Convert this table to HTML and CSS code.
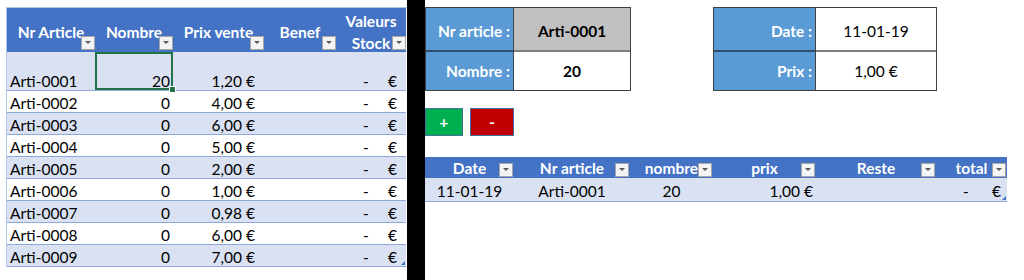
FILE: index.html
```html
<!DOCTYPE html>
<html lang="fr">
<head>
<meta charset="utf-8">
<title>Stock</title>
<link rel="stylesheet" href="styles.css">
</head>
<body>
<div class="page">
  <section class="stock">
    <div class="stock-tbl">
      <div class="th"><span>Nr Article</span><span class="flt"></span></div>
      <div class="th"><span>Nombre</span><span class="flt"></span></div>
      <div class="th"><span>Prix vente</span><span class="flt"></span></div>
      <div class="th"><span>Benef</span><span class="flt"></span></div>
      <div class="th"><span>Valeurs<br>Stock</span><span class="flt"></span></div>

      <div class="row band">
        <div class="c">Arti-0001</div><div class="c r sel">20<span class="handle"></span></div><div class="c r money">1,20 €</div><div class="c"></div><div class="c acct"><span>-</span><span>€</span></div>
      </div>
      <div class="row">
        <div class="c">Arti-0002</div><div class="c r">0</div><div class="c r money">4,00 €</div><div class="c"></div><div class="c acct"><span>-</span><span>€</span></div>
      </div>
      <div class="row band">
        <div class="c">Arti-0003</div><div class="c r">0</div><div class="c r money">6,00 €</div><div class="c"></div><div class="c acct"><span>-</span><span>€</span></div>
      </div>
      <div class="row">
        <div class="c">Arti-0004</div><div class="c r">0</div><div class="c r money">5,00 €</div><div class="c"></div><div class="c acct"><span>-</span><span>€</span></div>
      </div>
      <div class="row band">
        <div class="c">Arti-0005</div><div class="c r">0</div><div class="c r money">2,00 €</div><div class="c"></div><div class="c acct"><span>-</span><span>€</span></div>
      </div>
      <div class="row">
        <div class="c">Arti-0006</div><div class="c r">0</div><div class="c r money">1,00 €</div><div class="c"></div><div class="c acct"><span>-</span><span>€</span></div>
      </div>
      <div class="row band">
        <div class="c">Arti-0007</div><div class="c r">0</div><div class="c r money">0,98 €</div><div class="c"></div><div class="c acct"><span>-</span><span>€</span></div>
      </div>
      <div class="row">
        <div class="c">Arti-0008</div><div class="c r">0</div><div class="c r money">6,00 €</div><div class="c"></div><div class="c acct"><span>-</span><span>€</span></div>
      </div>
      <div class="row band">
        <div class="c">Arti-0009</div><div class="c r">0</div><div class="c r money">7,00 €</div><div class="c"></div><div class="c acct last"><span>-</span><span>€</span><span class="resize"></span></div>
      </div>
    </div>
  </section>

  <div class="divider"></div>

  <section class="panel">
    <div class="forms">
      <div class="form form-a">
        <div class="lbl row1">Nr article :</div>
        <div class="val row1 grey bold">Arti-0001</div>
        <div class="lbl">Nombre :</div>
        <div class="val bold">20</div>
      </div>
      <div class="form form-b">
        <div class="lbl row1">Date :</div>
        <div class="val row1">11-01-19</div>
        <div class="lbl">Prix :</div>
        <div class="val">1,00 €</div>
      </div>
    </div>

    <div class="buttons">
      <button class="btn plus" type="button">+</button>
      <button class="btn minus" type="button">-</button>
    </div>

    <div class="log-tbl">
      <div class="lh"><span>Date</span><span class="flt"></span></div>
      <div class="lh"><span>Nr article</span><span class="flt"></span></div>
      <div class="lh"><span>nombre</span><span class="flt"></span></div>
      <div class="lh"><span>prix</span><span class="flt"></span></div>
      <div class="lh"><span>Reste</span><span class="flt"></span></div>
      <div class="lh"><span>total</span><span class="flt"></span></div>

      <div class="ld ctr">11-01-19</div>
      <div class="ld ctr">Arti-0001</div>
      <div class="ld ctr">20</div>
      <div class="ld r money">1,00 €</div>
      <div class="ld"></div>
      <div class="ld acct2 last"><span>-</span><span>€</span><span class="resize"></span></div>
    </div>
  </section>
</div>
</body>
</html>
```

FILE: styles.css
```css
html, body {
  margin: 0;
  padding: 0;
  background: #ffffff;
}

body {
  font-family: "Lato", "Liberation Sans", sans-serif;
  font-size: 15.5px;
  color: #000000;
}

.page {
  display: flex;
  width: 1024px;
  height: 280px;
  overflow: hidden;
}

/* ---------- left stock table ---------- */
.stock {
  width: 407px;
  flex-shrink: 0;
  padding: 7px 0 0 6px;
  box-sizing: border-box;
}

.stock-tbl {
  display: grid;
  grid-template-columns: 88px 78px 91px 72px 70px;
  grid-template-rows: 44px 39px repeat(8, 22px);
  border-left: 1px solid #b4c6e7;
  border-top: 1px solid #b4c6e7;
  width: 400px;
}

.row {
  display: contents;
}

.row > .c {
  background: #ffffff;
}

.row.band > .c {
  background: #d9e1f2;
}

.c {
  display: flex;
  align-items: flex-end;
  padding: 0 3px 0 3px;
  box-sizing: border-box;
  border-bottom: 1px solid #8ea9db;
  line-height: 17px;
  white-space: nowrap;
}

.r {
  justify-content: flex-end;
}

.money {
  padding-right: 9px;
}

.acct {
  justify-content: space-between;
  padding-left: 27px;
  padding-right: 9px;
}

.sel {
  position: relative;
  box-shadow: inset 0 0 0 2px #217346;
}

.handle {
  position: absolute;
  right: -3px;
  bottom: -3px;
  width: 5px;
  height: 5px;
  background: #217346;
  border: 1px solid #ffffff;
  z-index: 2;
}

.last {
  position: relative;
}

.resize {
  position: absolute;
  right: 1px;
  bottom: 1px;
  width: 0;
  height: 0;
  border-left: 4px solid transparent;
  border-bottom: 4px solid #4472c4;
}

.th {
  position: relative;
  display: flex;
  align-items: center;
  justify-content: center;
  text-align: center;
  padding-top: 3px;
  box-sizing: border-box;
  background: #4472c4;
  color: #ffffff;
  font-weight: 700;
  line-height: 22px;
  white-space: nowrap;
}

.flt {
  position: absolute;
  right: 0;
  bottom: 2px;
  width: 14px;
  height: 14px;
  box-sizing: border-box;
  background: #f4f4f4;
  border: 1px solid #a6a6a6;
}

.flt::after {
  content: "";
  position: absolute;
  left: 3px;
  top: 4px;
  width: 0;
  height: 0;
  border-left: 3px solid transparent;
  border-right: 3px solid transparent;
  border-top: 3px solid #595959;
}

/* ---------- black divider ---------- */
.divider {
  width: 18px;
  flex-shrink: 0;
  background: #000000;
}

/* ---------- right panel ---------- */
.panel {
  display: flex;
  flex-direction: column;
  padding-top: 7px;
  flex: 1;
}

.forms {
  display: flex;
  gap: 82px;
}

.form {
  display: grid;
  grid-template-rows: 44px 38px;
  border: 1px solid #404040;
}

.form-a {
  grid-template-columns: 88px 116px;
}

.form-b {
  grid-template-columns: 102px 120px;
}

.lbl,
.val {
  display: flex;
  align-items: center;
  box-sizing: border-box;
  white-space: nowrap;
}

.row1 {
  border-bottom: 2px solid #595959;
  padding-top: 3px;
}

.lbl {
  justify-content: flex-end;
  padding-right: 3px;
  background: #5b9bd5;
  color: #ffffff;
  font-weight: 700;
  border-right: 1px solid #404040;
}

.lbl.row1 {
  border-bottom-color: #2f4f6f;
}

.val {
  justify-content: center;
  background: #ffffff;
}

.val.row1 {
  border-bottom-color: #7f7f7f;
}

.grey {
  background: #c0c0c0;
}

.bold {
  font-weight: 700;
}

.buttons {
  display: flex;
  gap: 7px;
  margin-top: 17px;
}

.btn {
  height: 28px;
  margin: 0;
  padding: 0;
  border: 1px solid #41719c;
  color: #ffffff;
  font-family: inherit;
  font-size: 16px;
  font-weight: 700;
  line-height: 26px;
}

.plus {
  width: 38px;
  background: #00b050;
}

.minus {
  width: 44px;
  background: #c00000;
}

/* ---------- log table ---------- */
.log-tbl {
  display: grid;
  grid-template-columns: 89px 116px 83px 103px 120px 71px;
  grid-template-rows: 21px 24px;
  margin-top: 21px;
  width: 582px;
}

.lh {
  position: relative;
  display: flex;
  align-items: flex-end;
  justify-content: center;
  padding-bottom: 0;
  box-sizing: border-box;
  background: #4472c4;
  color: #ffffff;
  font-weight: 700;
  line-height: 19px;
  white-space: nowrap;
}

.lh .flt {
  right: 1px;
  bottom: 1px;
}

.ld {
  display: flex;
  align-items: center;
  padding: 2px 3px 0;
  box-sizing: border-box;
  background: #d9e1f2;
  border-bottom: 1px solid #8ea9db;
  white-space: nowrap;
}

.ctr {
  justify-content: center;
}

.acct2 {
  justify-content: space-between;
  padding-left: 27px;
  padding-right: 6px;
}
```
